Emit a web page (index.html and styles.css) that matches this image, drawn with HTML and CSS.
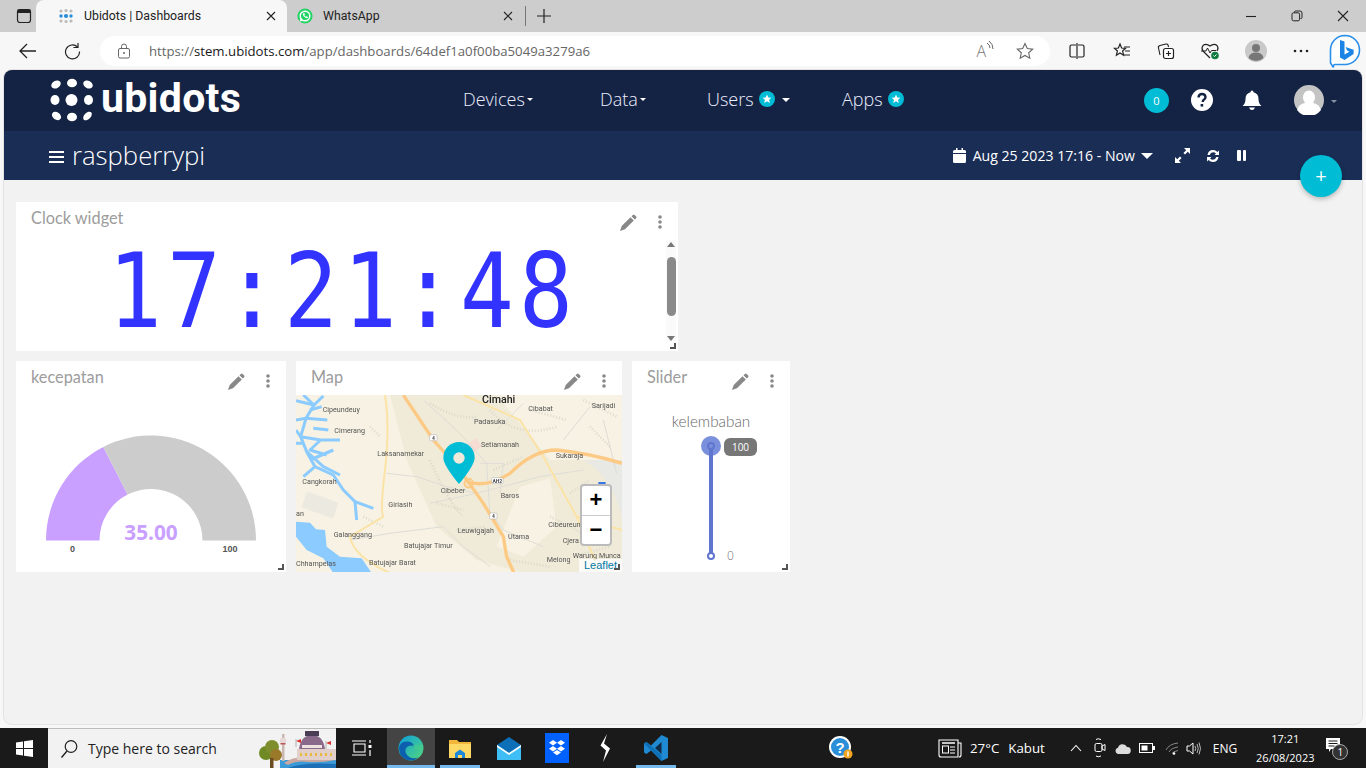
FILE: index.html
```html
<!DOCTYPE html>
<html lang="en">
<head>
<meta charset="utf-8">
<title>Ubidots | Dashboards</title>
<link rel="stylesheet" href="styles.css">
</head>
<body>
<div class="tabstrip">
  <div class="tab-toggle"><svg width="16" height="16" viewBox="0 0 16 16"><rect x="1.500" y="1.500" width="13" height="13" rx="2.500" fill="none" stroke="#222" stroke-width="1.200"/><rect x="1.500" y="1.500" width="13" height="3.500" fill="#222"/></svg></div>
  <div class="tab tab-active">
    <svg class="fav" width="16" height="16" viewBox="0 0 16 16"><g fill="#bbb"><circle cx="3" cy="3" r="1.600"/><circle cx="8" cy="2.500" r="1.600"/><circle cx="13" cy="3" r="1.600"/><circle cx="3" cy="13" r="1.600"/><circle cx="8" cy="13.500" r="1.600"/><circle cx="13" cy="13" r="1.600"/></g><g fill="#2a8fd8"><circle cx="3" cy="8" r="1.700"/><circle cx="8" cy="8" r="2.100"/><circle cx="13" cy="8" r="1.700"/></g></svg>
    <span class="tab-title">Ubidots | Dashboards</span>
    <svg class="tab-x" width="10" height="10" viewBox="0 0 10 10"><path d="M1 1l8 8M9 1l-8 8" stroke="#222" stroke-width="1.100"/></svg>
  </div>
  <div class="tab tab-other">
    <svg class="fav" width="16" height="16" viewBox="0 0 16 16"><circle cx="8" cy="8" r="7.600" fill="#25d366"/><circle cx="8" cy="8" r="4.800" fill="none" stroke="#fff" stroke-width="1.400"/><path d="M2.600 13.600l1.200-3.600 2.400 2.400z" fill="#fff"/><path d="M6 5.400c-.8 1.600 2.600 5.400 4.600 4.600l.4-1-1.400-.8-.6.500c-.6-.2-1.400-1-1.700-1.800l.6-.6-.7-1.400z" fill="#fff"/></svg>
    <span class="tab-title">WhatsApp</span>
    <svg class="tab-x" width="10" height="10" viewBox="0 0 10 10"><path d="M1 1l8 8M9 1l-8 8" stroke="#222" stroke-width="1.100"/></svg>
  </div>
  <div class="tab-sep"></div>
  <div class="tab-new"><svg width="16" height="16" viewBox="0 0 16 16"><path d="M8 1v14M1 8h14" stroke="#222" stroke-width="1.200"/></svg></div>
  <div class="win-controls">
    <svg width="12" height="12" viewBox="0 0 12 12"><path d="M1 6.500h10" stroke="#222" stroke-width="1.100"/></svg>
    <svg width="12" height="12" viewBox="0 0 12 12"><path d="M3.500 2.500V2q0-1 1-1h4.500q2 0 2 2v4.500q0 1-1 1h-.5" fill="none" stroke="#222"/><rect x="1" y="2.800" width="7.600" height="8" rx="1.500" fill="none" stroke="#222"/></svg>
    <svg width="12" height="12" viewBox="0 0 12 12"><path d="M1 1l10 10M11 1L1 11" stroke="#222" stroke-width="1.100"/></svg>
  </div>
</div>

<div class="toolbar">
  <svg class="tb-back" width="18" height="16" viewBox="0 0 18 16"><path d="M1 8h16M8 1L1 8l7 7" fill="none" stroke="#222" stroke-width="1.300"/></svg>
  <svg class="tb-refresh" width="18" height="18" viewBox="0 0 18 18"><path d="M14.500 5a7 7 0 1 0 2 4.500" fill="none" stroke="#222" stroke-width="1.200"/><path d="M15 1v4.500h-4.500" fill="none" stroke="#222" stroke-width="1.200"/></svg>
  <div class="address">
    <svg class="lock" width="14" height="16" viewBox="0 0 14 16"><rect x="1.500" y="5.500" width="11" height="9.500" rx="1.500" fill="none" stroke="#666"/><path d="M4.500 5.500V3.500a2.500 2.500 0 0 1 5 0v2" fill="none" stroke="#666"/><circle cx="7" cy="10" r="1" fill="#666"/></svg>
    <span class="url">https://<b>stem.ubidots.com</b>/app/dashboards/64def1a0f00ba5049a3279a6</span>
    <span class="read-aloud">A<svg width="8" height="12" viewBox="0 0 8 12"><path d="M1 3q3 2 3 5M3 1q4 3 4 8" fill="none" stroke="#666"/></svg></span>
    <svg class="addr-star" width="18" height="18" viewBox="0 0 18 18"><path d="M9 1.500l2.300 5 5.400.6-4 3.700 1.100 5.400L9 13.500l-4.800 2.700 1.100-5.400-4-3.700 5.400-.6z" fill="none" stroke="#666" stroke-width="1.100"/></svg>
  </div>
  <div class="tb-icons">
    <svg width="18" height="16" viewBox="0 0 18 16"><path d="M8 2H3.500Q2 2 2 3.500v9Q2 14 3.500 14H8M10 2h4.500Q16 2 16 3.500v9q0 1.500-1.500 1.500H10M9 0v16" fill="none" stroke="#222" stroke-width="1.200"/></svg>
    <svg width="18" height="18" viewBox="0 0 18 18"><path d="M7 2l1.600 4 4 .3-3 2.700 1 4.200L7 11l-3.600 2.200 1-4.200-3-2.700 4-.3z" fill="none" stroke="#222" stroke-width="1.200"/><path d="M11 5h6M12 9h5M11 13h6" stroke="#222" stroke-width="1.200"/></svg>
    <svg width="18" height="18" viewBox="0 0 18 18"><path d="M3 13L1.500 6Q1 4 3 3.500L9 2q1.500-.3 2 1l.6 2" fill="none" stroke="#222" stroke-width="1.100"/><rect x="6.500" y="6.500" width="10" height="10" rx="2" fill="#fff" stroke="#222" stroke-width="1.200"/><path d="M11.500 9v5M9 11.500h5" stroke="#222" stroke-width="1.200"/></svg>
    <svg width="20" height="18" viewBox="0 0 20 18"><path d="M10 16L3 9Q1 6 3 3.500 6 1 10 4q4-3 7-.5 2 2.500 0 5.500" fill="none" stroke="#222" stroke-width="1.200"/><path d="M1 9h5l1.500-3 2.500 5 1.500-2.500H16" fill="none" stroke="#222"/><circle cx="15" cy="13.500" r="3.800" fill="#107c41"/><path d="M13.500 13.500l1 1 2-2" fill="none" stroke="#fff"/></svg>
    <span class="tb-avatar"><svg width="22" height="22" viewBox="0 0 22 22"><circle cx="11" cy="11" r="11" fill="#c9c9c9"/><circle cx="11" cy="8" r="4" fill="#777"/><path d="M3.500 18q1-5.500 7.500-5.500T18.500 18a11 11 0 0 1-15 0z" fill="#777"/></svg></span>
    <svg width="18" height="4" viewBox="0 0 18 4"><circle cx="3" cy="2" r="1.300" fill="#222"/><circle cx="9" cy="2" r="1.300" fill="#222"/><circle cx="15" cy="2" r="1.300" fill="#222"/></svg>
    <svg class="tb-bing" width="32" height="34" viewBox="0 0 32 34"><path d="M16 1.500A14.500 14.500 0 0 1 16 30.500H6q-2 0-1.500 3L1.500 29V16A14.500 14.500 0 0 1 16 1.500z" fill="#fff" stroke="#2a8fe8" stroke-width="1.600"/><path d="M11 6l4.500 1.600v13l5-2.800-2.400-1.200-1.500-3.700 8 2.900v4.300L15.500 26 11 23.500z" fill="#1b84e4"/></svg>
  </div>
</div>

<div class="page">
  <header class="topnav">
    <div class="logo">
      <svg width="44" height="44" viewBox="0 0 44 44"><g fill="#fff"><ellipse cx="6" cy="6.500" rx="5" ry="3.700" transform="rotate(-30 6 6.500)"/><ellipse cx="22" cy="5" rx="5" ry="4.300"/><ellipse cx="38" cy="6.500" rx="5" ry="3.700" transform="rotate(30 38 6.500)"/><ellipse cx="5" cy="22" rx="4.500" ry="5"/><circle cx="21.500" cy="22" r="6"/><ellipse cx="38.500" cy="22" rx="4.500" ry="5"/><ellipse cx="6.500" cy="38" rx="5" ry="3.700" transform="rotate(35 6.500 38)"/><ellipse cx="22" cy="39" rx="5" ry="4.300"/><ellipse cx="37.500" cy="38" rx="5.200" ry="3.200" transform="rotate(-45 37.500 38)"/></g></svg>
      <span class="logo-text">ubidots</span>
    </div>
    <nav class="nav-main">
      <span class="nav-item nav-devices">Devices<i class="caret-s"></i></span>
      <span class="nav-item nav-data">Data<i class="caret-s"></i></span>
      <span class="nav-item nav-users">Users<svg class="star-badge" width="16" height="16" viewBox="0 0 16 16"><use href="#star-b"/></svg><i class="caret-s caret-wide"></i></span>
      <span class="nav-item">Apps<svg class="star-badge" width="16" height="16" viewBox="0 0 16 16"><use href="#star-b"/></svg></span>
    </nav>
    <div class="nav-right">
      <span class="count-badge">0</span>
      <svg class="help" width="22" height="22" viewBox="0 0 22 22"><circle cx="11" cy="11" r="11" fill="#fff"/><path d="M7.500 8.500Q7.800 5 11 5t3.500 3q0 1.700-1.700 2.700-1 .6-1 2v.3" fill="none" stroke="#14233f" stroke-width="2.400"/><rect x="9.600" y="15" width="2.600" height="2.600" fill="#14233f"/></svg>
      <svg class="bell" width="20" height="22" viewBox="0 0 20 22"><path d="M10 1.500q1.500 0 1.500 1.700Q16.500 4.500 16.500 10q0 4.500 3 7H.5q3-2.500 3-7 0-5.500 5-6.800Q8.500 1.500 10 1.500z" fill="#fff"/><path d="M7 18.500h6q-1 2.500-3 2.500t-3-2.500z" fill="#fff"/></svg>
      <svg class="user" width="30" height="30" viewBox="0 0 30 30"><circle cx="15" cy="15" r="15" fill="#c4c4c4"/><ellipse cx="15" cy="12.500" rx="6" ry="7" fill="#fff"/><path d="M3 25q2-6 8-7h8q6 1 8 7a15 15 0 0 1-24 0z" fill="#fff"/></svg>
      <i class="caret-s caret-grey"></i>
    </div>
  </header>
  <div class="subnav">
    <div class="dash-title"><span class="burger"><i></i><i></i><i></i></span>raspberrypi</div>
    <div class="dash-tools">
      <svg width="13" height="15" viewBox="0 0 13 15"><path d="M0 3.500q0-1.500 1.500-1.500H3V0h1.500v2h4V0H10v2h1.500Q13 2 13 3.500V5H0zM0 6h13v7.500q0 1.500-1.500 1.500h-10Q0 15 0 13.500z" fill="#fff"/></svg>
      <span class="date-range">Aug 25 2023 17:16 - Now</span>
      <i class="caret-date"></i>
      <svg class="t-expand" width="15" height="15" viewBox="0 0 15 15"><path d="M9 0h6v6l-2.200-2.200L10 6.600 8.400 5l2.800-2.800zM6 15H0V9l2.200 2.200L5 8.400 6.600 10l-2.800 2.800z" fill="#fff"/></svg>
      <svg class="t-refresh" width="14" height="14" viewBox="0 0 14 14"><path d="M1.500 6Q2.300 1 7 1q2.700 0 4.500 2L13 1.500V6H8.500l1.500-1.500Q8.800 3.200 7 3.200 4.500 3.200 3.700 6zM12.500 8Q11.700 13 7 13q-2.700 0-4.500-2L1 12.500V8h4.500L4 9.500q1.200 1.300 3 1.300 2.500 0 3.300-2.800z" fill="#fff"/></svg>
      <span class="pause"><i></i><i></i></span>
    </div>
  </div>
  <button class="fab" type="button">+</button>

  <main class="board">
    <section class="card card-clock">
      <div class="card-head"><span class="card-title">Clock widget</span><svg class="pencil" width="18" height="18" viewBox="0 0 18 18"><use href="#pencil"/></svg><svg class="kebab" width="4" height="14" viewBox="0 0 4 14"><use href="#kebab"/></svg></div>
      <div class="clock-body">
        <div class="clock-time"><span>1</span><span>7</span><span>:</span><span>2</span><span>1</span><span>:</span><span>4</span><span>8</span></div>
        <div class="scrollbar">
          <i class="sb-up"></i><b class="sb-thumb"></b><i class="sb-down"></i>
        </div>
      </div>
      <svg class="resize" width="6" height="6" viewBox="0 0 6 6"><use href="#resize"/></svg>
    </section>
    <div class="row">
      <section class="card card-gauge">
        <div class="card-head"><span class="card-title">kecepatan</span><svg class="pencil" width="18" height="18" viewBox="0 0 18 18"><use href="#pencil"/></svg><svg class="kebab" width="4" height="14" viewBox="0 0 4 14"><use href="#kebab"/></svg></div>
        <svg class="gauge" width="270" height="177" viewBox="16 395 270 177">
          <path d="M46 540.500A105 105 0 0 1 103.300 446.900L127.600 494.600A51.500 51.500 0 0 0 99.500 540.500z" fill="#c9a0ff"/>
          <path d="M103.300 446.900A105 105 0 0 1 256 540.500H202.500A51.500 51.500 0 0 0 127.600 494.600z" fill="#cccccc"/>
          <text x="151" y="539.500" class="g-val" text-anchor="middle">35.00</text>
          <text x="72.500" y="552" class="g-lab" text-anchor="middle">0</text>
          <text x="230" y="552" class="g-lab" text-anchor="middle">100</text>
        </svg>
        <svg class="resize" width="6" height="6" viewBox="0 0 6 6"><use href="#resize"/></svg>
      </section>
      <section class="card card-map">
        <div class="card-head"><span class="card-title">Map</span><svg class="pencil" width="18" height="18" viewBox="0 0 18 18"><use href="#pencil"/></svg><svg class="kebab" width="4" height="14" viewBox="0 0 4 14"><use href="#kebab"/></svg></div>
        <div class="map">
          <svg class="map-base" width="326" height="177" viewBox="18 105 978 531">
            <rect x="18" y="105" width="978" height="534" fill="#f7f2e3"/>
            <path d="M300 105L620 105 780 300 996 300V639H700L560 600 440 500 350 300z" fill="#f0ebd9"/>
            <path d="M690 380L780 355 800 500 700 590 620 560z" fill="#f7f2e3"/>
            <rect x="40" y="410" width="100" height="50" fill="#ece9e0" transform="rotate(20 90 435)"/>
            <rect x="540" y="240" width="30" height="30" fill="#f6dcd2" transform="rotate(-35 555 255)"/>
            <path d="M880 300Q960 340 996 470V300z" fill="#e8e8e4"/>
            <g fill="none" stroke="#dedcd6" stroke-width="3">
              <path d="M400 120L510 220 590 310 600 470M290 340L380 350 470 380 560 400 750 350 880 330M570 310H640L630 400M560 400L640 510 760 560M420 430L560 400M460 500L520 560 600 620M180 540L300 520 460 500M700 130L620 210M820 240L900 140M940 180L980 340"/>
            </g>
            <g fill="none" stroke="#d5d2c5" stroke-width="8" stroke-dasharray="3 6" opacity=".75">
              <path d="M420 300Q470 420 520 470M600 150Q680 240 800 200M610 330L700 290M500 510L590 500M780 470L880 520M240 200L270 230M900 200L960 260M850 590L960 560M220 470L280 500M420 130Q500 180 560 170M660 600L780 620M440 430L520 450M720 150L830 180M840 400L900 360M880 120L980 170"/>
            </g>
            <g fill="none" stroke="#fbe3a6" stroke-width="6">
              <path d="M285 105Q300 200 285 330 270 450 280 470 230 500 180 530 190 590 300 639"/>
              <path d="M520 105L690 180 760 290 860 470 915 600V639"/>
              <path d="M860 470L996 510"/>
            </g>
            <g fill="none" stroke="#fcca85" stroke-width="10">
              <path d="M340 105L430 240 510 330 580 430 640 530 650 590 672 639"/>
              <path d="M530 365Q590 385 660 340 730 270 800 270 900 280 996 310"/>
            </g>
            <path d="M545 360a13 13 0 1 0 1 1" fill="none" stroke="#fcca85" stroke-width="6"/>
            <g fill="#8bcbff">
              <path d="M18 485L60 488 78 508 105 510 110 560 150 590 215 595 245 639H130L100 595 50 570 18 530z"/>
            </g>
            <g fill="none" stroke="#8bcbff" stroke-width="9" stroke-linejoin="round">
              <path d="M40 105L72 135 48 175 32 230 50 275 75 320 130 345 160 390 195 425 250 445"/>
              <path d="M18 122L72 135M100 108L72 135M48 175L112 180M18 180L48 175M32 230L92 240 150 240M18 250L40 250M92 240L60 270 110 285M60 300L130 270M195 425L200 480M75 320L40 350M50 275L100 320 150 345M18 210L32 230M60 150L95 140M70 205L115 210"/>
            </g>
            <g class="map-labels">
              <text x="98" y="155">Cipeundeuy</text>
              <text x="133" y="218">Cimerang</text>
              <text x="262" y="287">Laksanamekar</text>
              <text x="37" y="372">Cangkorah</text>
              <text x="295" y="440">Giriasih</text>
              <text x="18" y="468">an</text>
              <text x="131" y="530">Galanggang</text>
              <text x="342" y="565">Batujajar Timur</text>
              <text x="18" y="617">Chhampelas</text>
              <text x="237" y="615">Batujajar Barat</text>
              <text x="715" y="152">Cibabat</text>
              <text x="905" y="143">Sarijadi</text>
              <text x="552" y="192">Padasuka</text>
              <text x="573" y="260">Setiamanah</text>
              <text x="797" y="294">Sukaraja</text>
              <text x="452" y="398">Cibeber</text>
              <text x="632" y="413">Baros</text>
              <text x="503" y="518">Leuwigajah</text>
              <text x="654" y="537">Utama</text>
              <text x="775" y="501">Cibeureum</text>
              <text x="818" y="550">Cjera</text>
              <text x="770" y="605">Melong</text>
              <text x="848" y="594">Warung Munca</text>
              <text class="map-city" x="576" y="129">Cimahi</text>
            </g>
            <g class="map-shields">
              <rect x="419" y="224" width="22" height="18" rx="3"/><text x="430" y="239" text-anchor="middle">4</text>
              <rect x="599" y="459" width="22" height="18" rx="3"/><text x="610" y="474" text-anchor="middle">4</text>
              <rect x="605" y="353" width="34" height="18" rx="3"/><text x="622" y="368" text-anchor="middle">AH2</text>
            </g>
            <rect x="925" y="366" width="22" height="14" fill="#3b78e7"/>
            <path d="M507 246a47 47 0 0 1 47 47q0 22-47 79-47-57-47-79a47 47 0 0 1 47-47z" fill="#00bcd4"/>
            <circle cx="507" cy="294" r="17" fill="#f0eadb"/>
          </svg>
          <div class="zoom-ctl"><span>+</span><span>−</span></div>
          <span class="leaflet">Leaflet</span>
          <svg class="resize" width="6" height="6" viewBox="0 0 6 6"><use href="#resize"/></svg>
        </div>
      </section>
      <section class="card card-slider">
        <div class="card-head"><span class="card-title">Slider</span><svg class="pencil" width="18" height="18" viewBox="0 0 18 18"><use href="#pencil"/></svg><svg class="kebab" width="4" height="14" viewBox="0 0 4 14"><use href="#kebab"/></svg></div>
        <div class="slider-label">kelembaban</div>
        <div class="slider">
          <i class="sl-halo"></i><i class="sl-track"></i><i class="sl-ring sl-top"></i><i class="sl-ring sl-bottom"></i>
          <span class="sl-tip">100</span>
          <span class="sl-min">0</span>
        </div>
        <svg class="resize" width="6" height="6" viewBox="0 0 6 6"><use href="#resize"/></svg>
      </section>
    </div>
  </main>
</div>

<footer class="taskbar">
  <div class="start"><svg width="17" height="17" viewBox="0 0 17 17"><path d="M0 2.400L7 1.400V8H0zM8 1.300L17 0v8H8zM0 9h7v6.600L0 14.600zM8 9h9v8L8 15.700z" fill="#fff"/></svg></div>
  <div class="search">
    <svg width="18" height="20" viewBox="0 0 18 20"><circle cx="11" cy="7.500" r="5.800" fill="none" stroke="#222" stroke-width="1.200"/><path d="M7 12L1.500 18.500" stroke="#222" stroke-width="1.400"/></svg>
    <span>Type here to search</span>
    <svg class="doodle" width="78" height="39" viewBox="0 0 78 39">
      <path d="M22 31h56v8H22z" fill="#3a9bd8"/><path d="M30 39q14-6 48-4v4z" fill="#1e6fb5"/>
      <rect x="24" y="5" width="2.500" height="27" fill="#c9b8b0"/><circle cx="25" cy="12" r="3.300" fill="#e6d8d8"/><rect x="22.500" y="14" width="5" height="1.500" fill="#b55"/>
      <circle cx="8" cy="24" r="7" fill="#6f8a24"/><circle cx="14" cy="18" r="7" fill="#7f8e2c"/><circle cx="18" cy="26" r="6" fill="#9a7a2a"/><rect x="12" y="29" width="3.500" height="10" fill="#6b4b20"/>
      <path d="M26 34q10-7 24-5 12 2 28-2v4q-16 3-28 2-12-2-20 3z" fill="#c8a8a0"/>
      <rect x="39" y="20" width="39" height="11" fill="#e3cfc9"/><path d="M41 20q2-14 13-14 11 0 13 14z" fill="#8a6a8a"/><rect x="47" y="2" width="14" height="5" fill="#4b3d55"/><rect x="44" y="16" width="20" height="3" fill="#efe3df"/>
      <path d="M42 24h2v3h-2zM47 24h2v3h-2zM52 24h2v3h-2zM57 24h2v3h-2zM62 24h2v3h-2zM67 24h2v3h-2zM72 24h2v3h-2z" fill="#e8b93a"/>
      <path d="M38 12l5-2v4zM68 14l5-2v4z" fill="#d33"/><path d="M38 10v8M68 12v8" stroke="#999" stroke-width=".7"/>
    </svg>
  </div>
  <div class="task-item ti-view"><svg width="20" height="16" viewBox="0 0 20 16"><path d="M0 1h14M0 15h14M2 4h11v8H2z" fill="none" stroke="#fff" stroke-width="1.100"/><rect x="16.500" y="5" width="3" height="3" fill="#fff"/><path d="M18 0v3M18 10v6" stroke="#fff" stroke-width="1.200"/></svg></div>
  <div class="task-item ti-edge ti-open"><svg width="26" height="26" viewBox="0 0 26 26"><defs><linearGradient id="ed" x1="0" y1="0" x2="1" y2="1"><stop offset="0" stop-color="#0c9fdd"/><stop offset="1" stop-color="#54d77a"/></linearGradient></defs><circle cx="13" cy="13" r="12.500" fill="url(#ed)"/><path d="M1 14Q1 7 8 6.500 15 6 16 11.500q-5-2-8 1.500-2 4 2 8 4 3.500 10 1.500Q17 25.500 13 25.500 2 25 1 14z" fill="#0b5fad"/><path d="M8 13q3-3.500 8-1.500 2 2.500 0 3.500h9q.5-3-.5-5-5-.5-9 0Q10 10 8 13z" fill="#4fd27f" opacity=".4"/></svg></div>
  <div class="task-item ti-files ti-open"><svg width="22" height="22" viewBox="0 0 22 22"><path d="M0 3h8l2 2h12v15H0z" fill="#f0b73a"/><rect x="0" y="7" width="22" height="14" fill="#ffd966"/><path d="M6 16l5-3.500 5 3.500v5h-3v-3H9v3H6z" fill="#1e88d8"/></svg></div>
  <div class="task-item ti-mail"><svg width="24" height="23" viewBox="0 0 24 23"><path d="M0 8L12 0l12 8v15H0z" fill="#0d6fb8"/><path d="M0 8l12 8 12-8v15H0z" fill="#3fbdf5"/><path d="M0 8l12 8 12-8v2L12 18 0 10z" fill="#fff"/></svg></div>
  <div class="task-item ti-drop"><svg width="24" height="30" viewBox="0 0 24 30"><rect width="24" height="30" fill="#0061fe"/><path d="M8 7l4 2.700L8 12.400 4 9.700zM16 7l4 2.700-4 2.700-4-2.700zM8 13l4 2.700-4 2.700-4-2.700zM16 13l4 2.700-4 2.700-4-2.700zM8 19.500l4-2.600 4 2.600-4 2.700z" fill="#fff"/></svg></div>
  <div class="task-item ti-sigma"><svg width="14" height="30" viewBox="0 0 14 30"><path d="M9 1L2.500 12.500 8 17.500 5 29l7-13.500L6 10.500z" fill="#fff"/></svg></div>
  <div class="task-item ti-code ti-open"><svg width="24" height="26" viewBox="0 0 24 26"><path d="M17.500 0L24 3v20l-6.500 3L7 15.500 2.500 19 0 17.500V8.500L2.500 7 7 10.500z" fill="#1f8ad2"/><path d="M17.500 7l-6.500 6 6.500 6z" fill="#0f2d4a"/><path d="M0 8.500L2.500 7l15 13v6z" fill="#0f6fb5"/></svg></div>
  <div class="task-help"><svg width="24" height="26" viewBox="0 0 24 26"><circle cx="11" cy="12" r="11" fill="#fff"/><circle cx="11" cy="12" r="9" fill="#2a8fd8"/><text x="11" y="18" text-anchor="middle" class="help-q">?</text><circle cx="19" cy="19" r="4.500" fill="#f2a51f"/><rect x="18.300" y="16.500" width="1.400" height="5" fill="#fff"/></svg></div>
  <div class="tray">
    <svg class="tr-news" width="24" height="20" viewBox="0 0 24 20"><path d="M1 2h19v17H3Q1 19 1 17zM20 5h3v12q0 2-2 2" fill="none" stroke="#fff" stroke-width="1.100"/><path d="M4 5h13" stroke="#fff" stroke-width="1.500"/><rect x="4.500" y="8" width="6" height="7" fill="none" stroke="#fff"/><path d="M12 9h5M12 12h5M12 15h5" stroke="#fff"/></svg>
    <span class="tr-temp">27°C</span>
    <span class="tr-weather">Kabut</span>
    <svg class="tr-chev" width="12" height="8" viewBox="0 0 12 8"><path d="M1 7l5-5.500L11 7" fill="none" stroke="#fff" stroke-width="1.100"/></svg>
    <svg class="tr-meet" width="12" height="20" viewBox="0 0 12 20"><rect x="1" y="5.500" width="7" height="8" rx="1.500" fill="none" stroke="#fff"/><path d="M8 8l3-1.500v6L8 11zM2 1.500q2-1.500 5 0M2 18q2 1.500 5 0" fill="none" stroke="#fff"/></svg>
    <svg class="tr-cloud" width="16" height="11" viewBox="0 0 16 11"><path d="M3.500 11a3.200 3.200 0 0 1-.5-6.300A4.800 4.800 0 0 1 12 4a3.500 3.500 0 0 1 .5 7z" fill="#ddd"/></svg>
    <svg class="tr-batt" width="16" height="10" viewBox="0 0 16 10"><rect x=".5" y=".5" width="13" height="9" fill="none" stroke="#fff"/><rect x="2.500" y="2.500" width="6" height="5" fill="#fff"/><rect x="14" y="3" width="2" height="4" fill="#fff"/></svg>
    <svg class="tr-wifi" width="14" height="13" viewBox="0 0 14 13"><path d="M1 8q3-6 12-7M4 10q2-4 9-5M7 11.500q1-2 6-3" fill="none" stroke="#888"/><circle cx="9" cy="11.500" r="1.300" fill="#fff"/></svg>
    <svg class="tr-sound" width="15" height="15" viewBox="0 0 15 15"><path d="M1 5h2.500L7 2v11L3.500 10H1z" fill="none" stroke="#fff"/><path d="M9 5q1.500 2.500 0 5M11 3q2.500 4.500 0 9M13 1.500q3 6 0 12" fill="none" stroke="#ccc" stroke-width=".9"/></svg>
    <span class="tr-lang">ENG</span>
    <span class="tr-clock"><span>17:21</span><span>26/08/2023</span></span>
    <span class="tr-notif"><svg width="14" height="14" viewBox="0 0 14 14"><path d="M0 0h14v11H5l-2 3v-3H0z" fill="#fff"/><path d="M2.500 3h9M2.500 5.500h9M2.500 8h6" stroke="#1a1a1a"/></svg><span class="tr-notif-n">1</span></span>
  </div>
</footer>

<svg class="defs" width="0" height="0">
  <defs>
    <g id="star-b"><circle cx="8" cy="8" r="8" fill="#00bcd4"/><path d="M8 3.500l1.300 2.900 3.100.3-2.300 2.100.7 3.100L8 10.300l-2.800 1.600.7-3.100L3.600 6.700l3.100-.3z" fill="#fff"/></g>
    <g id="pencil" fill="#888"><path d="M11.500 3.200l3.300 3.300L6 15.300 1 17l1.700-5z"/><path d="M12.500 2.200l1.300-1.300q.9-.8 1.800 0l1.500 1.500q.8.900 0 1.800l-1.300 1.300z"/></g>
    <g id="kebab" fill="#888"><circle cx="2" cy="2" r="1.800"/><circle cx="2" cy="7" r="1.800"/><circle cx="2" cy="12" r="1.800"/></g>
    <path id="resize" d="M4 0h2v6H0V4h4z" fill="#555"/>
  </defs>
</svg>
</body>
</html>
```

FILE: styles.css
```css
* { box-sizing: border-box; }
html, body { margin: 0; padding: 0; }
body {
  width: 1366px; height: 768px; overflow: hidden;
  background: #f7f7f7;
  font-family: "Open Sans", "Noto Sans", sans-serif;
  display: flex; flex-direction: column;
}
.defs { position: absolute; }

/* Browser tab strip */
.tabstrip { height: 32px; background: #cdcdcd; display: flex; align-items: flex-end; flex: none; }
.tab-toggle { width: 36px; height: 32px; padding-left: 16px; display: flex; align-items: center; }
.tab { height: 32px; display: flex; align-items: center; font-family: Roboto, sans-serif; font-size: 12.300px; color: #222; }
.tab-active { width: 251px; background: #f7f7f7; border-radius: 8px 8px 0 0; padding: 0 11px 0 22px; }
.tab-other { width: 238px; padding: 0 12px 0 10px; }
.fav { flex: none; }
.tab-title { flex: 1; margin-left: 10px; }
.tab-active .tab-title { margin-left: 10px; }
.tab-x { flex: none; }
.tab-sep { width: 1px; height: 20px; background: #777; margin-bottom: 6px; }
.tab-new { width: 36px; height: 32px; padding-left: 10px; display: flex; align-items: center; }
.win-controls { margin-left: auto; width: 138px; height: 32px; display: flex; align-items: center; justify-content: space-between; padding: 0 17px 0 17px; }

/* Browser toolbar */
.toolbar { height: 38px; background: #f7f7f7; display: flex; align-items: center; flex: none; position: relative; }
.tb-back { margin-left: 19px; }
.tb-refresh { margin-left: 26px; }
.address { width: 950px; height: 30px; margin-left: 19px; background: #fff; border-radius: 15px; display: flex; align-items: center; padding: 0 16px 0 17px; }
.url { margin-left: 18px; font-size: 13.200px; color: #666; flex: 1; white-space: nowrap; }
.url b { font-weight: 400; color: #1a1a1a; }
.read-aloud { display: flex; align-items: flex-start; color: #777; font-size: 16px; font-weight: 300; margin-right: 22px; }
.tb-icons { display: flex; align-items: center; margin-left: 18px; }
.tb-icons > :nth-child(1) { margin-right: 27px; }
.tb-icons > :nth-child(2) { margin-right: 26px; }
.tb-icons > :nth-child(3) { margin-right: 25px; }
.tb-icons > :nth-child(4) { margin-right: 25px; }
.tb-avatar { width: 22px; height: 22px; margin-right: 25px; display: block; }
.tb-icons > :nth-child(6) { margin-right: 19px; }
.tb-avatar svg { display: block; }

/* Page frame */
.page {
  height: 654px; margin: 0 4px; flex: none;
  background: #f2f2f2;
  border-radius: 8px;
  box-shadow: 0 0 0 1px #e3e3e3;
  position: relative; overflow: hidden;
}
.topnav { height: 61px; background: #142344; display: flex; align-items: center; color: #fff; position: relative; }
.logo { display: flex; align-items: center; margin-left: 46px; margin-top: -1px; width: 192px; flex: none; }
.logo svg { flex: none; }
.logo-text { font-family: Roboto, sans-serif; font-weight: 700; font-size: 41px; margin-left: 7px; letter-spacing: .3px; line-height: 44px; position: relative; top: -2px; }
.nav-main { display: flex; align-items: center; margin-left: 221px; margin-top: -4px; font-size: 18px; font-weight: 300; color: #eef; }
.nav-item { display: flex; align-items: center; }
.nav-devices { width: 137px; }
.nav-data { width: 107px; }
.nav-users { width: 135px; }
.caret-s { display: inline-block; border: 3.500px solid transparent; border-top: 3.500px solid #fff; border-bottom: 0; margin-left: 2px; margin-top: 2px; }
.caret-wide { margin-left: 7px; border-width: 4px; border-bottom: 0; }
.star-badge { margin-left: 5px; margin-top: 1px; }
.nav-right { margin-left: auto; display: flex; align-items: center; padding-right: 25px; margin-top: -1px; }
.count-badge { width: 25px; height: 25px; border-radius: 50%; background: #00bcd4; font-size: 11px; display: flex; align-items: center; justify-content: center; }
.help { margin-left: 22px; }
.bell { margin-left: 29px; }
.user { margin-left: 32px; }
.caret-grey { border-top-color: #8a93a6; margin-left: 7px; }

.subnav { height: 49px; background: #1a2d55; color: #fff; display: flex; align-items: center; justify-content: space-between; padding-right: 116px; }
.dash-title { display: flex; align-items: center; font-size: 25.700px; font-weight: 300; margin-left: 45px; line-height: 30px; }
.burger { width: 15px; display: flex; flex-direction: column; gap: 3px; margin-right: 8px; margin-top: 2px; }
.burger i { display: block; height: 2px; background: #fff; }
.dash-tools { display: flex; align-items: center; font-size: 14.100px; }
.date-range { margin-left: 7px; white-space: nowrap; }
.caret-date { display: block; border: 6px solid transparent; border-top: 6px solid #fff; border-bottom: 0; margin-left: 6px; }
.t-expand { margin-left: 22px; }
.t-refresh { margin-left: 16px; }
.pause { margin-left: 17px; display: flex; gap: 2px; }
.pause i { display: block; width: 3.500px; height: 11px; background: #fff; border-radius: 1px; }

.fab {
  position: absolute; left: 1296px; top: 85px;
  width: 42px; height: 42px; border-radius: 50%; border: 0;
  background: #00bcd4; color: #fff; font: 400 20px/42px "Open Sans", sans-serif; padding: 0;
  box-shadow: 0 2px 5px rgba(0,0,0,.25);
}

/* Dashboard */
.board { padding: 22px 12px; display: flex; flex-direction: column; gap: 10px; }
.row { display: flex; gap: 10px; }
.card { background: #fff; position: relative; display: flex; flex-direction: column; }
.card-head { height: 34px; display: flex; align-items: center; padding: 0 16px 0 15px; flex: none; }
.card-title { flex: 1; font-family: Lato, sans-serif; font-weight: 400; font-size: 16.300px; color: #9c9c9c; line-height: 20px; margin-top: -3px; }
.pencil { margin-top: 7px; }
.kebab { margin-left: 21px; margin-top: 6px; }
.resize { position: absolute; right: 2px; bottom: 2px; }
.card-clock { width: 662px; height: 149px; }
.clock-body { flex: 1; display: flex; align-items: center; position: relative; }
.clock-time {
  display: flex; margin-left: 88px; margin-top: -5px;
  font-family: "DejaVu Sans Mono", monospace; font-size: 104px; line-height: 108px;
  color: #3333ff; font-weight: 400;
}
.clock-time span { width: 58.700px; text-align: center; transform: scaleX(.86); }
.scrollbar { position: absolute; right: 2px; top: 4px; bottom: 10px; width: 10px; display: flex; flex-direction: column; align-items: center; background: #fafafa; }
.sb-up { border: 4px solid transparent; border-bottom: 5px solid #777; border-top: 0; margin-top: 2px; }
.sb-thumb { display: block; width: 9px; height: 59px; border-radius: 5px; background: #8a8a8a; margin-top: 10px; }
.sb-down { border: 4px solid transparent; border-top: 5px solid #777; border-bottom: 0; margin-top: auto; margin-bottom: 0; }

.card-gauge { width: 270px; height: 211px; }
.gauge { display: block; }
.g-val { font: 700 20.800px "Open Sans", sans-serif; fill: #c9a0ff; }
.g-lab { font: 700 9px "Liberation Sans", sans-serif; fill: #555; }

.card-map { width: 326px; height: 211px; }
.map { position: relative; height: 177px; overflow: hidden; }
.map-base { display: block; filter: blur(.3px); }
.map-labels text { font: 400 21.500px Roboto, sans-serif; fill: #555; }
.map-labels .map-city { font-size: 32px; font-weight: 500; fill: #222; }
.map-shields rect { fill: #fff; stroke: #aaa; stroke-width: 1.500; }
.map-shields text { font: 700 15px Roboto, sans-serif; fill: #444; }
.zoom-ctl { position: absolute; left: 284px; top: 89px; width: 32px; height: 62px; background: #fff; border: 2px solid #bbb; border-radius: 4px; display: flex; flex-direction: column; }
.zoom-ctl span { flex: 1; display: flex; align-items: center; justify-content: center; font: 700 22px/1 "Liberation Sans", sans-serif; color: #000; }
.zoom-ctl span:first-child { border-bottom: 1px solid #ccc; }
.leaflet { position: absolute; right: 0; bottom: 0; padding: 0 5px; background: rgba(255,255,255,.75); font: 400 11px/13px "Liberation Sans", sans-serif; color: #0078a8; }

.card-slider { width: 158px; height: 211px; }
.slider-label { text-align: center; font-family: Lato, sans-serif; font-weight: 300; font-size: 15.300px; color: #666; margin-top: 17px; line-height: 18px; }
.slider { position: relative; flex: 1; padding-top: 1px; }
.sl-halo { position: absolute; left: 69px; top: 6px; width: 20px; height: 20px; border-radius: 50%; background: #7b90dc; }
.sl-track { position: absolute; left: 77px; top: 16px; width: 4px; height: 110px; background: #5f75cf; }
.sl-ring { position: absolute; border-radius: 50%; background: #fff; border: 2px solid #5f75cf; }
.sl-top { left: 75px; top: 12px; width: 8px; height: 8px; background: #7b90dc; }
.sl-bottom { left: 75px; top: 122px; width: 8px; height: 8px; }
.sl-tip { position: absolute; left: 92px; top: 8px; width: 33px; height: 18px; border-radius: 6px; background: #777; color: #fff; font: 400 10px/18px "Open Sans", sans-serif; text-align: center; }
.sl-min { position: absolute; left: 95px; top: 118px; font: 300 12px/16px "Open Sans", sans-serif; color: #777; }

/* Windows taskbar */
.taskbar { height: 40px; margin-top: 4px; background: #1a1a1a; display: flex; align-items: stretch; color: #fff; flex: none; }
.start { width: 48px; display: flex; align-items: center; justify-content: center; }
.search { width: 288px; background: #f2f2f2; border-top: 1px solid #bbb; display: flex; align-items: center; color: #222; font-size: 14px; padding-left: 12px; position: relative; overflow: hidden; }
.search span { margin-left: 10px; }
.doodle { position: absolute; right: 0; top: 0; }
.task-item { display: flex; align-items: center; justify-content: center; border-bottom: 3px solid transparent; padding-top: 3px; }
.ti-view { width: 51px; }
.ti-edge { width: 48px; background: #444; border-bottom-color: #76b9ed; }
.ti-files { width: 40px; margin-left: 5px; border-bottom-color: #76b9ed; }
.ti-mail { width: 48px; margin-left: 5px; }
.ti-drop { width: 48px; }
.ti-sigma { width: 48px; }
.ti-code { width: 40px; margin-left: 7px; border-bottom-color: #76b9ed; }
.task-help { width: 26px; margin-left: 153px; display: flex; align-items: center; }
.help-q { font: 700 15px "Liberation Sans", sans-serif; fill: #fff; }
.tray { display: flex; align-items: center; margin-left: 83px; font-size: 13.300px; flex: 1; }
.tr-temp { margin-left: 8px; }
.tr-weather { margin-left: 9px; }
.tr-chev { margin-left: 25px; }
.tr-meet { margin-left: 12px; }
.tr-cloud { margin-left: 9px; }
.tr-batt { margin-left: 8px; }
.tr-wifi { margin-left: 10px; }
.tr-sound { margin-left: 7px; }
.tr-lang { margin-left: 12px; font-size: 12px; }
.tr-clock { display: flex; flex-direction: column; align-items: center; font-size: 11px; line-height: 19px; margin-left: 16px; width: 64px; }
.tr-notif { position: relative; margin-left: 9px; display: block; width: 14px; height: 14px; margin-top: -6px; }
.tr-notif svg { display: block; }
.tr-notif-n { position: absolute; left: 6px; top: 6px; width: 16px; height: 16px; border-radius: 50%; background: #333; border: 1px solid #aaa; font-size: 10px; line-height: 14px; text-align: center; }
```
